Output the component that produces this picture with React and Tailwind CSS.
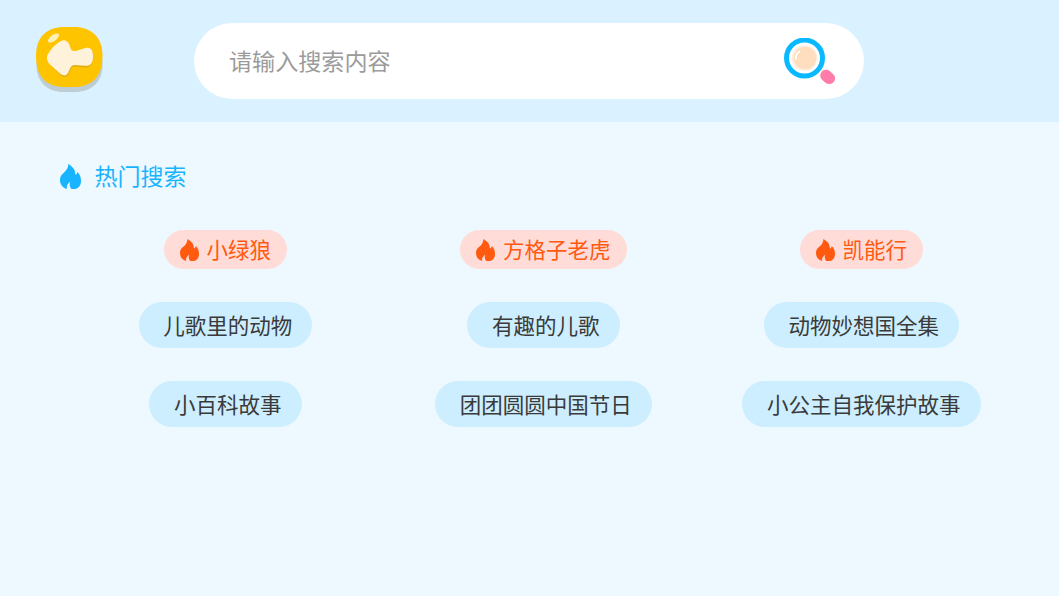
import React, { useState } from 'react';

const hotKeywords = ['小绿狼', '方格子老虎', '凯能行'];

const keywords = [
  '儿歌里的动物',
  '有趣的儿歌',
  '动物妙想国全集',
  '小百科故事',
  '团团圆圆中国节日',
  '小公主自我保护故事',
];

const FlameIcon = ({ className }) => (
  <svg className={className} viewBox="0 0 64 76" fill="currentColor" preserveAspectRatio="none">
    <path d="M25 0C40 8 47 19 47 33C50 32 52 29 53 24C60 30 64 40 64 51C64 65 57 74 47 76H35C30 71 28 63 31 54C23 59 19 67 21 76C7 72 0 62 0 48C0 38 4 33 11 27C18 21 25 13 25 0Z" />
  </svg>
);

const BackIcon = () => (
  <svg className="block w-[68px] h-[66px]" viewBox="-0.500 0 68 66">
    <path d="M1 34V38C1 55 12 65 28 65H39C56 65 67 55 67 38V34Z" fill="#bdcdd3" />
    <path d="M0.500 29C0.500 10 11 0 29 0H38C56 0 67 10 67 29C67 50 56 60 38 60H29C11 60 0.500 50 0.500 29Z" fill="#ffc400" />
    <path d="M14 37L24 47C27 51 32 51 33.500 46.500L36 41Q37 39.500 39 39.500L50 40.500C54 41 56.500 38 57.500 32L50 30L30 30Z" fill="#dfae12" />
    <path d="M12 28C16 21 20 17 25.500 14C30 12 33 14.500 34.500 19.500C35.500 23.500 37 24.500 40 24L50 21C55 19.500 57.500 23 57.500 29C57.500 36.500 55 39 50 38.800L39 38Q36 38 35 40.500L32.500 46C31 49 28 49 25 47L14 37Q10 32 12 28Z" fill="#fff2da" />
    <ellipse cx="18" cy="11" rx="6.500" ry="3" transform="rotate(-37 18 11)" fill="#fff0b8" />
  </svg>
);

const SearchIcon = () => (
  <svg className="block w-[52px] h-[48px]" viewBox="0 0 52 48">
    <circle cx="20.500" cy="20" r="18" fill="#fff" stroke="#0ab8ff" strokeWidth="5" />
    <circle cx="20.500" cy="20" r="13" fill="#fff0e2" />
    <circle cx="21" cy="20" r="11.300" fill="#ffdec0" />
    <path d="M11.800 21C11.800 17 13.500 14.500 15.500 13.500" fill="none" stroke="#fff" strokeWidth="1.600" strokeLinecap="round" />
    <path d="M42 37.500L45.300 40.300" stroke="#ff7ba9" strokeWidth="11.500" strokeLinecap="round" />
  </svg>
);

const App = () => {
  const [value, setValue] = useState('');

  return (
    <div className="h-screen overflow-hidden bg-[#edf8ff] font-['Noto_Sans_CJK_SC',sans-serif]">
      {/* Header */}
      <header className="h-[122px] bg-[#daf1ff] flex items-start pl-[35px]">
        <button className="mt-[27px]" aria-label="返回">
          <BackIcon />
        </button>
        <div className="mt-[23px] ml-[91px] w-[670px] h-[76px] bg-white rounded-full flex items-center pl-[35px] pr-[28px]">
          <input
            value={value}
            onChange={(e) => setValue(e.target.value)}
            placeholder="请输入搜索内容"
            className="flex-1 min-w-0 pb-[2px] outline-none text-[23.100px] text-[#333] placeholder:text-[#9b9b9b] placeholder:opacity-100"
          />
          <button className="mt-[1px]" aria-label="搜索">
            <SearchIcon />
          </button>
        </div>
      </header>

      {/* Hot searches */}
      <main>
        <h2 className="mt-[37px] ml-[60px] h-[34px] flex items-center text-[23px] leading-[34px] text-[#18b4ff]">
          <FlameIcon className="w-[21px] h-[25px] mr-[13.500px]" />
          <span className="pb-[2px]">热门搜索</span>
        </h2>

        <div className="mt-[37px] ml-[66.500px] w-[954px] grid grid-cols-3 justify-items-center text-[21.500px] leading-[32px]">
          {hotKeywords.map((word) => (
            <button
              key={word}
              className="h-[39px] mb-[33.300px] pl-[16px] pr-[16.200px] rounded-full bg-[#ffdcd8] text-[#ff5a10] flex items-center"
            >
              <FlameIcon className="w-[19px] h-[22px] mr-[7.800px]" />
              <span className="pb-[1px]">{word}</span>
            </button>
          ))}
          {keywords.map((word) => (
            <button
              key={word}
              className="h-[45.500px] mb-[33.300px] pl-[24.500px] pr-[20px] rounded-full bg-[#cdeeff] text-[#3a3a3a] flex items-center"
            >
              {word}
            </button>
          ))}
        </div>
      </main>
    </div>
  );
};

export default App;
